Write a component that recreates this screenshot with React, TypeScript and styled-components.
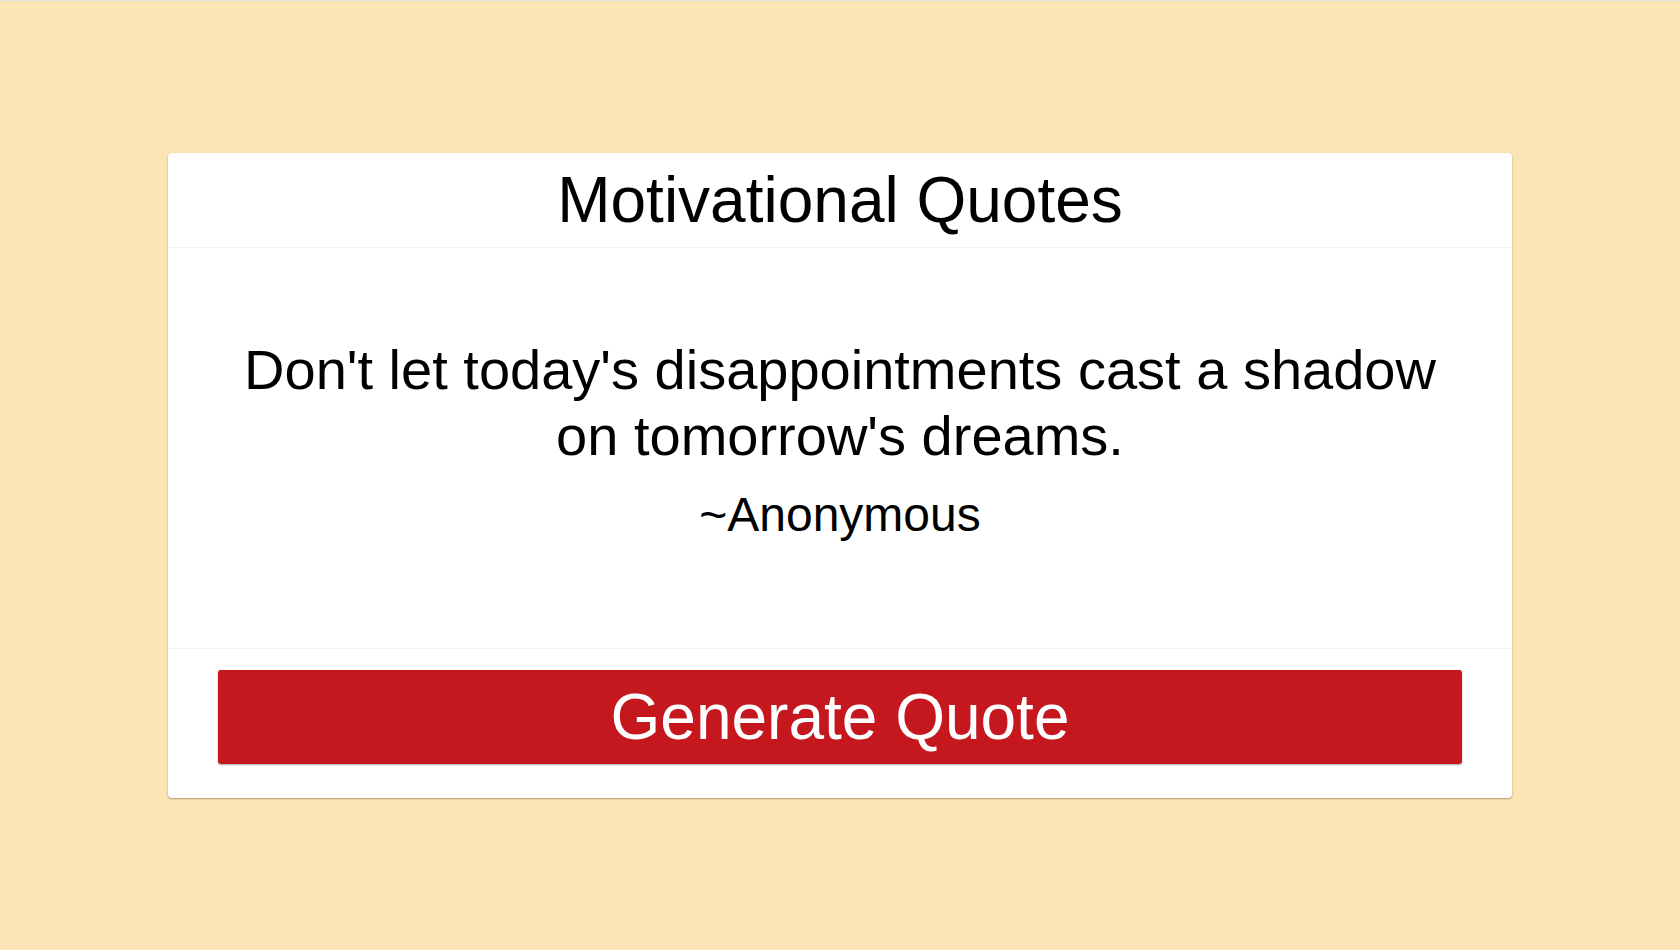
import React from "react";
import styled, { createGlobalStyle } from "styled-components";

const GlobalStyle = createGlobalStyle`
  html, body {
    margin: 0;
    padding: 0;
  }
  body {
    background: #fce5b5;
    font-family: "Liberation Sans", Arial, sans-serif;
    border-top: 1px solid #e2e0dc;
  }
`;

const Page = styled.main`
  min-height: 949px;
  display: flex;
  align-items: center;
  justify-content: center;
`;

const Card = styled.section`
  width: 80%;
  background: #ffffff;
  border-radius: 4px;
  box-shadow: 0 1px 2px rgba(80, 60, 20, 0.45);
  display: flex;
  flex-direction: column;
`;

const Header = styled.header`
  padding: 11px 20px 10px;
  border-bottom: 1px solid #f2f2f2;
  text-align: center;
`;

const Title = styled.h1`
  margin: 0;
  font-size: 64px;
  font-weight: 400;
  line-height: 73px;
  color: #000;
`;

const Body = styled.div`
  padding: 89px 60px 106px;
  text-align: center;
  border-bottom: 1px solid #f2f2f2;
`;

const Quote = styled.p`
  margin: 0 auto;
  max-width: 1200px;
  font-size: 56px;
  line-height: 66px;
  color: #000;
`;

const Author = styled.p`
  margin: 18px 0 0;
  font-size: 48px;
  line-height: 55px;
  color: #000;
`;

const Footer = styled.footer`
  padding: 21px 50px 34px;
  display: flex;
`;

const Button = styled.button`
  flex: 1;
  height: 94px;
  border: none;
  border-radius: 3px;
  background: #c4181e;
  color: #ffffff;
  font-family: "Liberation Sans", Arial, sans-serif;
  font-size: 64px;
  line-height: 73px;
  box-shadow: 0 1px 2px rgba(0, 0, 0, 0.35);
  cursor: pointer;
`;

export default function App() {
  return (
    <>
      <GlobalStyle />
      <Page>
        <Card>
          <Header>
            <Title>Motivational Quotes</Title>
          </Header>
          <Body>
            <Quote>Don't let today's disappointments cast a shadow on tomorrow's dreams.</Quote>
            <Author>~Anonymous</Author>
          </Body>
          <Footer>
            <Button>Generate Quote</Button>
          </Footer>
        </Card>
      </Page>
    </>
  );
}
